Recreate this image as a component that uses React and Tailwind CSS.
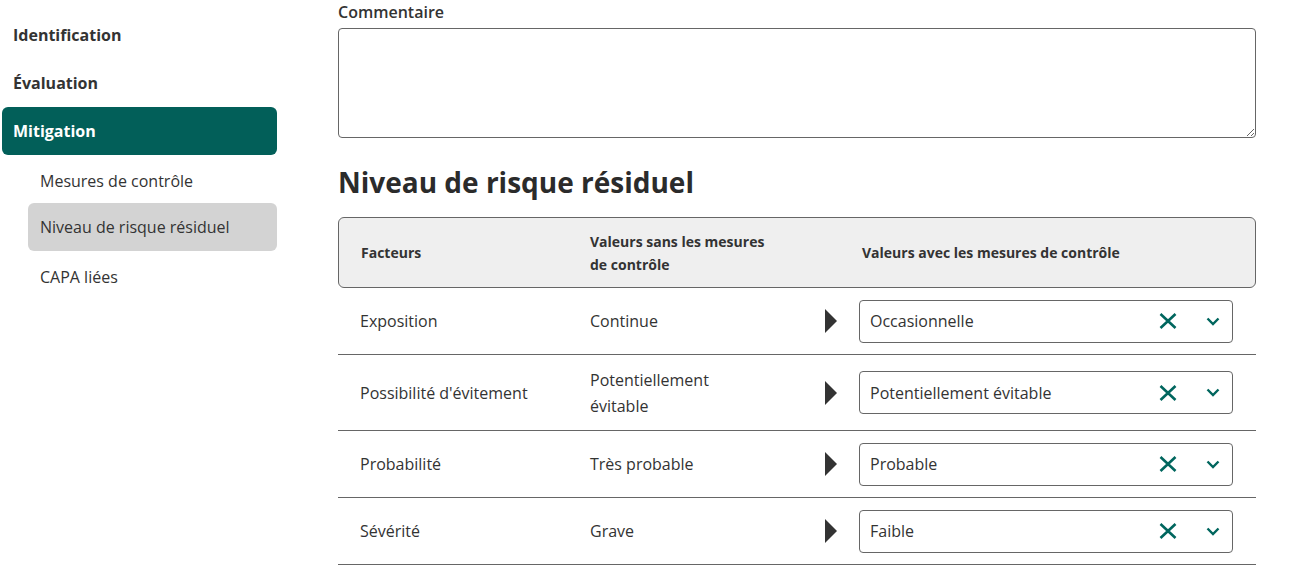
const rows = [
  { factor: "Exposition", before: "Continue", after: "Occasionnelle" },
  { factor: "Possibilité d'évitement", before: "Potentiellement évitable", after: "Potentiellement évitable" },
  { factor: "Probabilité", before: "Très probable", after: "Probable" },
  { factor: "Sévérité", before: "Grave", after: "Faible" },
];

function Sidebar() {
  return (
    <nav className="w-[277px] pl-[2px] pt-[11px] flex flex-col shrink-0">
      <div className="h-[48px] px-[11px] flex items-center font-bold text-[16px] text-[#333]">Identification</div>
      <div className="h-[48px] px-[11px] flex items-center font-bold text-[16px] text-[#333]">Évaluation</div>
      <div className="h-[48px] px-[11px] flex items-center font-bold text-[16px] text-white bg-[#025f59] rounded-md">Mitigation</div>
      <div className="pl-[26px] flex flex-col">
        <div className="h-[48px] pt-[3px] px-[12px] flex items-center text-[16px] text-[#333]">Mesures de contrôle</div>
        <div className="h-[48px] px-[12px] flex items-center text-[16px] text-[#333] bg-[#d3d3d3] rounded-md">Niveau de risque résiduel</div>
        <div className="h-[50px] pt-[2px] px-[12px] flex items-center text-[16px] text-[#333]">CAPA liées</div>
      </div>
    </nav>
  );
}

function Select({ value }) {
  return (
    <div className="w-[374px] h-[43px] border border-[#666] rounded-[4px] flex items-center pl-[10px] pr-[12px] bg-white">
      <span className="flex-1 text-[16px] text-[#333]">{value}</span>
      <svg width="18" height="16" viewBox="0 0 18 16" className="mr-[29px]">
        <path d="M1.5 1 L16.5 15 M16.5 1 L1.5 15" stroke="#00665e" strokeWidth="2.6" fill="none" />
      </svg>
      <svg width="14" height="9" viewBox="0 0 14 9">
        <path d="M1.5 1.5 L7 7 L12.5 1.5" stroke="#00665e" strokeWidth="2.4" fill="none" />
      </svg>
    </div>
  );
}

export default function App() {
  return (
    <div className="w-[1294px] h-[585px] bg-white flex overflow-hidden text-[#333]" style={{ fontFamily: '"Open Sans", "Noto Sans", sans-serif' }}>
      <Sidebar />
      <main className="ml-[61px] w-[918px] flex flex-col">
        <label className="text-[16px] font-semibold leading-[24px]">Commentaire</label>
        <textarea className="mt-[4px] h-[110px] w-full border border-[#666] rounded-[4px] resize-y" />
        <h2 className="mt-[26px] text-[28px] font-bold leading-[36px] text-[#2b2b2b]">Niveau de risque résiduel</h2>
        <div className="mt-[17px]">
          <div className="h-[71px] bg-[#efefef] border border-[#666] rounded-md flex items-center text-[14px] font-bold">
            <div className="w-[251px] pl-[22px]">Facteurs</div>
            <div className="w-[190px] leading-[23px]">Valeurs sans les mesures de contrôle</div>
            <div className="ml-[82px]">Valeurs avec les mesures de contrôle</div>
          </div>
          {rows.map((r) => (
            <div key={r.factor} className="flex items-center py-[11.5px] border-b border-[#666] text-[16px]">
              <div className="w-[252px] pl-[22px]">{r.factor}</div>
              <div className="w-[180px] leading-[26px]">{r.before}</div>
              <div className="w-[55px]" />
              <svg width="12" height="24" viewBox="0 0 12 24" className="shrink-0">
                <path d="M0 0 L12 12 L0 24 Z" fill="#333" />
              </svg>
              <div className="w-[22px]" />
              <Select value={r.after} />
            </div>
          ))}
        </div>
      </main>
    </div>
  );
}
